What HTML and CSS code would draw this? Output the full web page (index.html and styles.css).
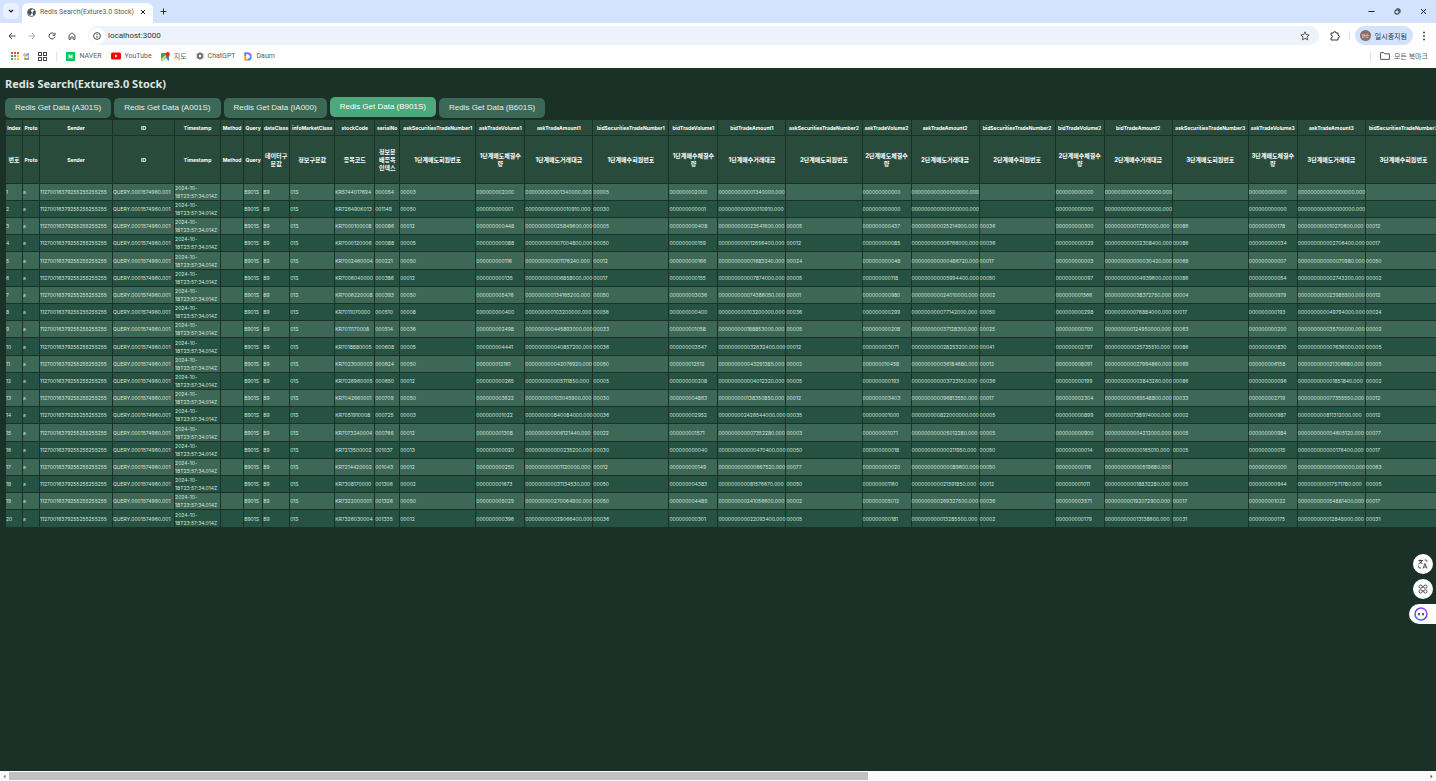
FILE: index.html
```html
<!DOCTYPE html>
<html lang="ko">
<head>
<meta charset="utf-8">
<title>Redis Search(Exture3.0 Stock)</title>
<link rel="stylesheet" href="styles.css">
</head>
<body>
<header class="browser">
  <div class="tabstrip">
    <button class="tab-search" aria-label="탭 검색"><svg width="6" height="6" viewBox="0 0 6 6"><path d="M1 2l2 2 2-2" fill="none" stroke="#1f1f1f" stroke-width="1.1"/></svg></button>
    <div class="tab">
      <svg width="9" height="9" viewBox="0 0 18 18"><circle cx="9" cy="9" r="8" fill="#fff" stroke="#4a4d51" stroke-width="1.8"/><path d="M2 6c2-4 6-5 8-4.500 0 2-1 3-3 3.500 0 2 3 2 3 4s-3 3-3 6c-4-1-6-5-5-9zM12 7l4-2c1.500 4 .5 8-3 10 0-2-2-2-2-4s1-2 1-4z" fill="#4a4d51"/></svg>
      <span class="tab-title">Redis Search(Exture3.0 Stock)</span>
      <button class="bare" aria-label="탭 닫기"><svg width="6" height="6" viewBox="0 0 6 6"><path d="M1 1l4 4M5 1L1 5" stroke="#1f1f1f"/></svg></button>
    </div>
    <button class="bare new-tab" aria-label="새 탭"><svg width="7" height="7" viewBox="0 0 7 7"><path d="M3.500 .5v6M.5 3.500h6" stroke="#333"/></svg></button>
    <div class="window-controls">
      <button class="bare" aria-label="최소화"><svg width="7" height="7" viewBox="0 0 7 7"><path d="M.5 3.500h6" stroke="#1f1f1f"/></svg></button>
      <button class="bare" aria-label="이전 크기로"><svg width="7" height="7" viewBox="0 0 7 7"><rect x="1" y="2" width="4" height="4" rx="1" fill="none" stroke="#1f1f1f"/><path d="M2.500 1h2.500q1 0 1 1v2.500" fill="none" stroke="#1f1f1f"/></svg></button>
      <button class="bare" aria-label="닫기"><svg width="7" height="7" viewBox="0 0 7 7"><path d="M1 1l5 5M6 1L1 6" stroke="#1f1f1f"/></svg></button>
    </div>
  </div>
  <div class="toolbar">
    <nav class="nav-buttons">
      <button class="bare" aria-label="뒤로"><svg width="8" height="8" viewBox="0 0 8 8"><path d="M7.500 4H1M4 1L1 4l3 3" fill="none" stroke="#444"/></svg></button>
      <button class="bare" aria-label="앞으로"><svg width="8" height="8" viewBox="0 0 8 8"><path d="M.5 4H7M4 1l3 3-3 3" fill="none" stroke="#b0b0b0"/></svg></button>
      <button class="bare" aria-label="새로고침"><svg width="8" height="8" viewBox="0 0 8 8"><path d="M6.500 2.200A3 3 0 1 0 7 4.500M7 .8v2.400H4.600" fill="none" stroke="#444"/></svg></button>
      <button class="bare" aria-label="홈"><svg width="8" height="8" viewBox="0 0 8 8"><path d="M1 3.300L4 .8l3 2.500v4H5.200V5H2.800v2.300H1z" fill="none" stroke="#444" stroke-width=".9"/></svg></button>
    </nav>
    <div class="address">
      <span class="info"><svg width="8" height="8" viewBox="0 0 8 8"><circle cx="4" cy="4" r="3.400" fill="none" stroke="#333" stroke-width=".9"/><path d="M4 3.600v2.200M4 2v.9" stroke="#333" stroke-width=".9"/></svg></span>
      <input type="text" value="localhost:3000" aria-label="주소창">
      <button class="bare" aria-label="북마크에 추가"><svg width="10" height="10" viewBox="0 0 18 18"><path d="M9 1.500l2.300 5 5.200.6-3.900 3.600 1.100 5.300L9 13.300 4.300 16l1.100-5.300L1.500 7.100l5.200-.6z" fill="none" stroke="#444" stroke-width="1.600"/></svg></button>
    </div>
    <div class="toolbar-end">
      <button class="bare" aria-label="확장 프로그램"><svg width="10" height="10" viewBox="0 0 20 20"><path d="M2 4h5q0-3 2.500-3T12 4h4v4.500q3 .3 3 2.500t-3 2.500V18H2v-4q3-.4 3-3T2 8z" fill="none" stroke="#333" stroke-width="1.900"/></svg></button>
      <span class="divider"></span>
      <button class="profile"><span class="avatar">현승</span><span>일시중지됨</span></button>
      <button class="bare" aria-label="메뉴"><svg width="4" height="10" viewBox="0 0 4 10"><g fill="#333"><circle cx="2" cy="1.500" r=".9"/><circle cx="2" cy="5" r=".9"/><circle cx="2" cy="8.500" r=".9"/></g></svg></button>
    </div>
  </div>
  <nav class="bookmarks">
    <a href="#"><svg width="8" height="8" viewBox="0 0 8 8"><path fill="#e8453c" d="M0 0h2v2H0zM3 0h2v2H3zM6 0h2v2H6z"/><path fill="#34a853" d="M0 3h2v2H0z"/><path fill="#4285f4" d="M3 3h2v2H3z"/><path fill="#fbbc05" d="M6 3h2v2H6zM3 6h2v2H3zM6 6h2v2H6z"/><path fill="#34a853" d="M0 6h2v2H0z"/></svg><span>앱</span></a>
    <button class="bare" aria-label="탭 그룹"><svg width="9" height="9" viewBox="0 0 9 9"><g fill="none" stroke="#444"><rect x=".5" y=".5" width="3" height="3"/><rect x="5.500" y=".5" width="3" height="3"/><rect x=".5" y="5.500" width="3" height="3"/><rect x="5.500" y="5.500" width="3" height="3"/></g></svg></button>
    <span class="divider"></span>
    <a href="#"><svg width="9" height="9" viewBox="0 0 9 9"><path fill="#05c75a" d="M0 0h9v9H0z"/><path fill="#fff" d="M2.500 2.500h1.300l1.400 2v-2h1.300v4H5.200l-1.400-2v2H2.500z"/></svg><span>NAVER</span></a>
    <a href="#"><svg width="10" height="8" viewBox="0 0 10 8"><rect y=".5" width="10" height="7" rx="1.600" fill="#f00"/><path fill="#fff" d="M4 2.500L6.700 4 4 5.500z"/></svg><span>YouTube</span></a>
    <a href="#"><svg width="9" height="9" viewBox="0 0 9 9"><rect y="1" width="8" height="8" rx="1" fill="#34a853"/><path d="M1 9l4-4 3 3.500-1 .5z" fill="#e3e8ee"/><path d="M4 5L8 9V4z" fill="#4285f4"/><path d="M0 7l5-4.500 1 1L1 9z" fill="#fdd74b"/><path d="M6.700 0a2.200 2.200 0 0 1 2.200 2.200c0 1.500-1.700 2.200-2.200 4-.5-1.800-2.200-2.500-2.200-4A2.200 2.200 0 0 1 6.700 0z" fill="#d93025"/></svg><span>지도</span></a>
    <a href="#"><svg width="8" height="8" viewBox="0 0 16 16"><g fill="none" stroke="#555" stroke-width="1.500"><ellipse cx="8" cy="8" rx="3.500" ry="7"/><ellipse cx="8" cy="8" rx="3.500" ry="7" transform="rotate(60 8 8)"/><ellipse cx="8" cy="8" rx="3.500" ry="7" transform="rotate(120 8 8)"/></g></svg><span>ChatGPT</span></a>
    <a href="#"><svg width="8" height="9" viewBox="0 0 8 9"><g fill="none" stroke-width="2"><path d="M1.200 4V1.200H4" stroke="#4d8df6"/><path d="M4 1.200q2.800.3 2.800 3.300" stroke="#8b6bea"/><path d="M6.800 4.500q0 3-2.800 3.300" stroke="#4d8df6"/><path d="M1.200 4v3.800H4" stroke="#f9a13a"/></g></svg><span>Daum</span></a>
    <div class="all-bookmarks">
      <span class="divider"></span>
      <a href="#"><svg width="10" height="8" viewBox="0 0 10 8"><path d="M.6 7.400V.6h3l1 1.200h4.800v5.600z" fill="none" stroke="#444" stroke-width=".9"/></svg><span>모든 북마크</span></a>
    </div>
  </nav>
</header>

<main class="page">
  <h1>Redis Search(Exture3.0 Stock)</h1>
  <div class="queries">
    <button>Redis Get Data (A301S)</button>
    <button>Redis Get Data (A001S)</button>
    <button>Redis Get Data (IA000)</button>
    <button class="active">Redis Get Data (B901S)</button>
    <button>Redis Get Data (B601S)</button>
  </div>
  <table class="grid">
    <colgroup id="cols"></colgroup>
    <thead id="head"></thead>
    <tbody id="rows"></tbody>
  </table>
</main>

<div class="scrollbar" aria-hidden="true">
  <svg width="9" height="9" viewBox="0 0 9 9"><path d="M5.500 2.800v3.400L3.500 4.500z" fill="#777"/></svg>
  <div class="track"><div class="thumb"></div></div>
  <svg width="9" height="9" viewBox="0 0 9 9"><path d="M3.500 2.800v3.400l2-1.700z" fill="#555"/></svg>
</div>

<aside class="dock">
  <button class="round" aria-label="번역"><svg width="10" height="10" viewBox="0 0 20 20"><g fill="none" stroke="#333" stroke-width="1.700"><path d="M1 3h9M5.500 1v2M8 3q-1 5-7 7M3 4q2 4 6 5.500M13 2h3q2 0 2 3v1M1 13v2q0 3 3 3h2M10 19l4-10 4 10M11.500 16h5"/></g></svg></button>
  <button class="round" aria-label="도구"><svg width="10" height="10" viewBox="0 0 20 20"><g fill="none" stroke="#444" stroke-width="1.800"><rect x="2" y="2" width="6.500" height="6.500" rx="3"/><rect x="11.500" y="2" width="6.500" height="6.500" rx="3"/><rect x="2" y="11.500" width="6.500" height="6.500" rx="3"/><rect x="11.500" y="11.500" width="6.500" height="6.500" rx="3"/><path d="M8 6h4M8 14h4"/></g></svg></button>
  <button class="assistant" aria-label="도우미"><svg width="14" height="14" viewBox="0 0 14 14"><defs><linearGradient id="ring" x1="0" y1="1" x2="1" y2="0"><stop offset="0" stop-color="#2f7bff"/><stop offset=".5" stop-color="#5b3df0"/><stop offset="1" stop-color="#b44cf2"/></linearGradient></defs><circle cx="7" cy="7" r="6" fill="#fff" stroke="url(#ring)" stroke-width="1.500"/><path d="M5 6.500v1.200M9 6.500v1.200" stroke="#222" stroke-width="1.500" stroke-linecap="round"/></svg></button>
</aside>
<script src="table.js"></script>
</body>
</html>
```
FILE: styles.css
```css
* { box-sizing: border-box; }

body {
  margin: 0;
  height: 100vh;
  display: flex;
  flex-direction: column;
  overflow: hidden;
  position: relative;
  background: #1b3026;
  font-family: "Noto Sans", "Noto Sans CJK KR", sans-serif;
}

button, input { font-family: inherit; border: 0; }
svg { display: block; flex: none; }

.bare {
  display: flex;
  padding: 0;
  background: none;
}

/* Browser frame */
.browser {
  background: #fff;
  color: #5a5d61;
  font-family: Roboto, "Noto Sans CJK KR", sans-serif;
  font-size: 7px;
}

.tabstrip {
  display: flex;
  align-items: flex-end;
  height: 23px;
  padding-left: 3px;
  background: #d3e3fd;
}

.tab-search {
  display: flex;
  align-items: center;
  justify-content: center;
  width: 16px;
  height: 16px;
  margin: 0 3px 4px 0;
  padding: 0;
  border-radius: 5px;
  background: #e9f1fe;
}

.tab {
  display: flex;
  align-items: center;
  width: 131px;
  height: 20px;
  padding: 0 7px 2px 5px;
  gap: 4px;
  border-radius: 6px 6px 0 0;
  background: #fff;
}

.tab-title { flex: 1; white-space: nowrap; }
.new-tab { margin: 0 0 8px 7px; }

.window-controls {
  display: flex;
  gap: 19px;
  margin: 0 9px 8px auto;
}

.toolbar {
  display: flex;
  align-items: center;
  height: 25px;
  padding: 0 10px 0 8px;
}

.nav-buttons { display: flex; gap: 12px; }

.address {
  display: flex;
  align-items: center;
  flex: 1;
  height: 19px;
  margin-left: 12px;
  padding: 0 9px 0 1px;
  gap: 3px;
  border-radius: 10px;
  background: #edf2fb;
}

.info {
  display: flex;
  align-items: center;
  justify-content: center;
  width: 16px;
  height: 16px;
  border-radius: 8px;
  background: #fff;
}

.address input {
  flex: 1;
  min-width: 0;
  padding: 0;
  background: none;
  color: #333;
  font-size: 8px;
  outline: 0;
}

.toolbar-end {
  display: flex;
  align-items: center;
  gap: 9px;
  margin-left: 11px;
}

.divider { width: 1px; height: 9px; background: #d3e3fd; }

.profile {
  display: flex;
  align-items: center;
  gap: 4px;
  height: 19px;
  margin-left: -4px;
  padding: 0 6px 0 5px;
  border-radius: 10px;
  background: #d3e3fd;
  color: #26374f;
  font-size: 7px;
}

.avatar {
  display: flex;
  align-items: center;
  justify-content: center;
  width: 11px;
  height: 11px;
  border-radius: 6px;
  background: #8d6e63;
  color: #fff;
  font-size: 4px;
}

.bookmarks {
  display: flex;
  align-items: center;
  height: 20px;
  padding: 0 8px 4px 11px;
  gap: 9px;
}

.bookmarks a {
  display: flex;
  align-items: center;
  gap: 4px;
  color: inherit;
  text-decoration: none;
}

.all-bookmarks {
  display: flex;
  align-items: center;
  gap: 9px;
  margin-left: auto;
}

/* Application page */
.page {
  flex: 1;
  min-height: 0;
  overflow: hidden;
  padding: 8px 0 0 5px;
}

h1 {
  margin: 0;
  color: #dfe5e1;
  font-size: 11px;
  line-height: 16px;
}

.queries {
  display: flex;
  gap: 3px;
  margin-top: 6px;
}

.queries button {
  height: 20px;
  padding: 0 10px;
  border-radius: 5px;
  background: #3b6857;
  color: #e9f0ec;
  font: 8px/10px "Liberation Sans", sans-serif;
}

.queries .active {
  background: #4ca97b;
  color: #fff;
  transform: translateY(-1px);
}

.grid {
  width: 1437px;
  margin-top: 1px;
  table-layout: fixed;
  border-collapse: separate;
  border-spacing: 1px;
  color: #d6e2dc;
  font: 5px/8px Inter, "Noto Sans CJK KR", sans-serif;
}

.col-xs { width: 16px; }
.col-sender { width: 72px; }
.col-id { width: 61px; }
.col-time { width: 45px; }
.col-method { width: 22px; }
.col-query { width: 18px; }
.col-class { width: 26px; }
.col-market { width: 44px; }
.col-code { width: 39px; }
.col-serial { width: 24px; }
.col-member { width: 75px; }
.col-volume { width: 48px; }
.col-amount { width: 67px; }

.grid th {
  padding: 0;
  background: #294b3c;
  color: #fff;
  font-weight: 700;
  white-space: nowrap;
}

.grid th:lang(ko) {
  padding: 0 1px;
  font-size: 6px;
  white-space: normal;
}

.names { height: 15px; }
.labels { height: 47px; }

.grid td {
  height: 16px;
  padding: 0;
  background: #265243;
  white-space: nowrap;
}

.grid tbody tr:nth-child(odd) td { background: #3d6858; }
.grid tbody tr:nth-child(5n) td { height: 17px; }
.grid .time { white-space: normal; }

/* Horizontal scrollbar */
.scrollbar {
  display: flex;
  align-items: center;
  height: 10px;
  background: #fafafa;
}

.track { flex: 1; }

.thumb {
  width: 60.6%;
  height: 8px;
  background: #c1c1c1;
}

/* Floating shortcuts over the page */
.dock {
  position: absolute;
  top: 554px;
  right: 0;
  display: flex;
  flex-direction: column;
  align-items: flex-end;
  gap: 5px;
}

.dock button {
  display: flex;
  align-items: center;
  height: 20px;
  background: #fff;
}

.round {
  width: 20px;
  margin-right: 3px;
  padding: 0 5px;
  border-radius: 10px;
}

.assistant {
  width: 27px;
  padding: 0 5px;
  border-radius: 10px 0 0 10px;
}
```
FILE: table.js
```js
const columns = [
  ["xs", "Index", "번호"], ["xs", "Proto"], ["sender", "Sender"], ["id", "ID"],
  ["time", "Timestamp"], ["method", "Method"], ["query", "Query"],
  ["class", "dataClass", "데이터구분값"], ["market", "infoMarketClass", "정보구분값"],
  ["code", "stockCode", "종목코드"], ["serial", "serialNo", "정보분배종목인덱스"]
];
for (let level = 1; level <= 3; level++) {
  for (const [side, label] of [["ask", "매도"], ["bid", "매수"]]) {
    columns.push(["member", `${side}SecuritiesTradeNumber${level}`, `${level}단계${label}회원번호`]);
    if (level === 3 && side === "bid") break;
    columns.push(["volume", `${side}TradeVolume${level}`, `${level}단계${label}체결수량`]);
    columns.push(["amount", `${side}TradeAmount${level}`, `${level}단계${label}거래대금`]);
  }
}

// stock code, serial, then member / volume / amount for each side and level
const trades = `
KR5744017694 000054 00003 2000 1340000 00005 2000 1340000 - 0 0 - 0 0 - 0 0 -
KR726490K013 001149 00050 1 10910 00030 1 10910 - 0 0 - 0 0 - 0 0 -
KR7000100008 000086 00012 448 25849600 00005 408 23541600 00005 437 25214900 00036 300 17310000 00086 178 10270600 00012
KR7000120006 000088 00005 88 7004800 00050 159 12656400 00012 85 6766000 00036 29 2308400 00086 34 2706400 00017
KR7002460004 000221 00050 116 1176240 00012 166 1683240 00024 48 486720 00017 3 30420 00068 7 70980 00050
KR7006040000 000386 00012 135 6858000 00017 155 7874000 00005 118 5994400 00050 97 4939600 00086 54 2743200 00002
KR7006220008 000393 00050 5476 134165200 00050 3036 74386050 00001 980 24010000 00002 1566 38372750 00004 979 23985500 00012
KR7011070000 000510 00008 400 103200000 00056 400 103200000 00036 299 77142000 00050 298 76884000 00017 193 49794000 00024
KR7011170008 000514 00036 2498 445893000 00033 1058 188853000 00005 208 37128300 00025 700 124950000 00063 200 35700000 00002
KR7018880005 000608 00005 4441 40857200 00036 3547 32632400 00012 3071 28253200 00041 2797 25735510 00086 830 7636000 00005
KR7023000003 000624 00050 12161 42076920 00050 12512 43291385 00002 10458 36184680 00012 8091 27994860 00069 6158 21306680 00005
KR7026960005 000650 00012 265 5111850 00005 208 4012320 00005 193 3723100 00036 199 3843260 00086 96 1851840 00002
KR7042660001 000709 00050 3622 103045900 00030 4863 138350850 00012 3403 96813550 00017 2304 65548800 00033 2719 77355550 00012
KR7051910008 000725 00003 1022 840084000 00036 2952 2426544000 00035 1000 822000000 00005 899 738974000 00002 987 811312000 00012
KR7073240004 000766 00012 1308 6121440 00022 1571 7352280 00003 1071 5012280 00005 900 4212000 00005 984 4605120 00077
KR7213500002 001037 00013 20 235200 00030 40 470400 00050 18 211950 00050 14 165010 00005 15 176400 00017
KR7214420002 001043 00012 250 1120000 00012 149 667520 00077 20 89600 00050 116 519680 - 0 0 00063
KR7308170000 001306 00002 1673 31134530 00050 4383 81576670 00050 1160 21591850 00012 1011 18832280 00005 944 17571780 00005
KR7322000001 001326 00050 5029 270064900 00050 4489 241056600 00002 5012 269327500 00036 3571 192072900 00017 1022 54881400 00017
KR7326030004 001335 00012 396 29066400 00036 301 22093400 00005 181 13285500 00002 179 13138600 00031 175 12845000 00031
`.trim().split("\n").map(line => line.split(" "));

const format = (value, i) => {
  if (i < 2) return value;
  const kind = (i - 2) % 3;
  if (kind === 0) return value === "-" ? "" : value;
  return kind === 1 ? value.padStart(12, "0") : value.padStart(18, "0") + ".000";
};

document.getElementById("cols").innerHTML = columns.map(([kind]) => `<col class="col-${kind}">`).join("");
document.getElementById("head").innerHTML =
  `<tr class="names">${columns.map(c => `<th lang="en" scope="col">${c[1]}</th>`).join("")}</tr>` +
  `<tr class="labels">${columns.map(c => c[2]
    ? `<th lang="ko" scope="col">${c[2]}</th>`
    : `<th lang="en" scope="col">${c[1]}</th>`).join("")}</tr>`;
document.getElementById("rows").innerHTML = trades.map((trade, n) => {
  const start = [n + 1, "a", "11270016379255255255255", "QUERY.0001574960.001"].map(v => `<td>${v}</td>`).join("");
  const time = `<td class="time">2024-10-<wbr>18T23:57:34.014Z</td>`;
  const rest = ["", "B901S", "B9", "01S", ...trade.map(format)].map(v => `<td>${v}</td>`).join("");
  return `<tr>${start}${time}${rest}</tr>`;
}).join("");
```
